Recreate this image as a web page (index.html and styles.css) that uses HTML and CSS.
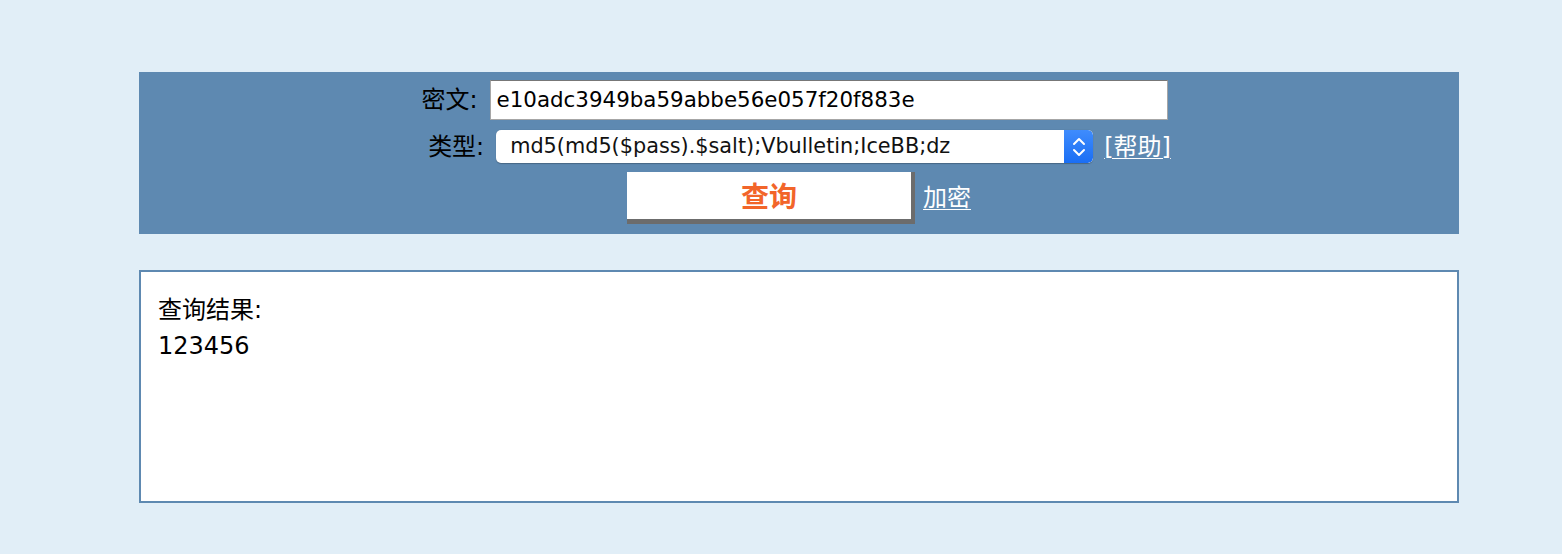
FILE: index.html
```html
<!DOCTYPE html>
<html lang="zh-CN">
<head>
<meta charset="utf-8">
<title>md5解密</title>
<link rel="stylesheet" href="styles.css">
</head>
<body>
<div class="page">
  <form class="panel">
    <div class="row row-one">
      <label class="label">密文:</label>
      <div class="text-input">e10adc3949ba59abbe56e057f20f883e</div>
    </div>
    <div class="row row-two">
      <label class="label">类型:</label>
      <div class="select">
        <span class="select-text">md5(md5($pass).$salt);Vbulletin;IceBB;dz</span>
        <span class="select-arrow">
          <svg width="16" height="26" viewBox="0 0 16 26"><path d="M3 10 L8 5 L13 10 M3 16 L8 21 L13 16" fill="none" stroke="#fff" stroke-width="2" stroke-linecap="round" stroke-linejoin="round"/></svg>
        </span>
      </div>
      <a class="link help" href="#">[帮助]</a>
    </div>
    <div class="row row-three">
      <button type="button" class="query-btn">查询</button>
      <a class="link" href="#">加密</a>
    </div>
  </form>
  <div class="result">
    <div class="result-line">查询结果:</div>
    <div class="result-line">123456</div>
  </div>
</div>
</body>
</html>
```
FILE: styles.css
```css
html, body {
  margin: 0;
  padding: 0;
}
body {
  background: #e1eef7;
  font-family: "DejaVu Sans", "Noto Sans CJK SC", sans-serif;
  color: #000;
}
.page {
  width: 1320px;
  margin-left: 139px;
  padding-top: 72px;
}
.panel {
  background: #5e89b1;
  height: 162px;
  box-sizing: border-box;
  padding-top: 8px;
  display: flex;
  flex-direction: column;
  align-items: center;
  gap: 10px;
}
.row {
  display: flex;
  align-items: center;
  justify-content: center;
}
.row-one {
  gap: 11px;
  margin-right: 9px;
}
.row-two {
  gap: 11px;
  margin-left: 1px;
}
.row-three {
  gap: 8px;
  margin-top: -1px;
}
.label {
  font-size: 24px;
  line-height: 30px;
  width: 57px;
  white-space: nowrap;
}
.text-input {
  width: 678px;
  height: 40px;
  box-sizing: border-box;
  background: #fff;
  border: 1px solid #a6a6a6;
  border-top-color: #777;
  padding: 0 6px;
  font-size: 21.4px;
  line-height: 38px;
  white-space: nowrap;
}
.select {
  width: 597px;
  height: 33px;
  box-sizing: border-box;
  background: #fff;
  border-radius: 5px;
  display: flex;
  align-items: center;
  overflow: hidden;
  box-shadow: 0 0.5px 1px rgba(0,0,0,0.25);
}
.select-text {
  flex: 1;
  padding-left: 14px;
  font-size: 20.8px;
  line-height: 33px;
  white-space: nowrap;
  color: #111;
}
.select-arrow {
  width: 29px;
  height: 33px;
  background: linear-gradient(#3f8cfd, #1a6ef4);
  display: flex;
  align-items: center;
  justify-content: center;
  border-radius: 0 5px 5px 0;
}
.link {
  color: #fff;
  font-size: 24px;
  line-height: 30px;
  text-decoration: underline;
  text-underline-offset: 3px;
  text-decoration-thickness: 1px;
}
.query-btn {
  width: 288px;
  height: 52px;
  box-sizing: border-box;
  background: #fff;
  border-style: solid;
  border-width: 0 4px 5px 0;
  border-color: #fff #6c6c6c #6c6c6c #fff;
  padding: 5px 0 0;
  font-family: "DejaVu Sans", "Noto Sans CJK SC", sans-serif;
  font-size: 28px;
  font-weight: bold;
  color: #f2652a;
  line-height: 42px;
  cursor: pointer;
}
.result {
  margin-top: 36px;
  height: 233px;
  box-sizing: border-box;
  background: #fff;
  border: 2px solid #5e89b1;
  padding: 20px 17px 18px;
}
.result-line {
  font-size: 24px;
  line-height: 36px;
  white-space: nowrap;
}
```
